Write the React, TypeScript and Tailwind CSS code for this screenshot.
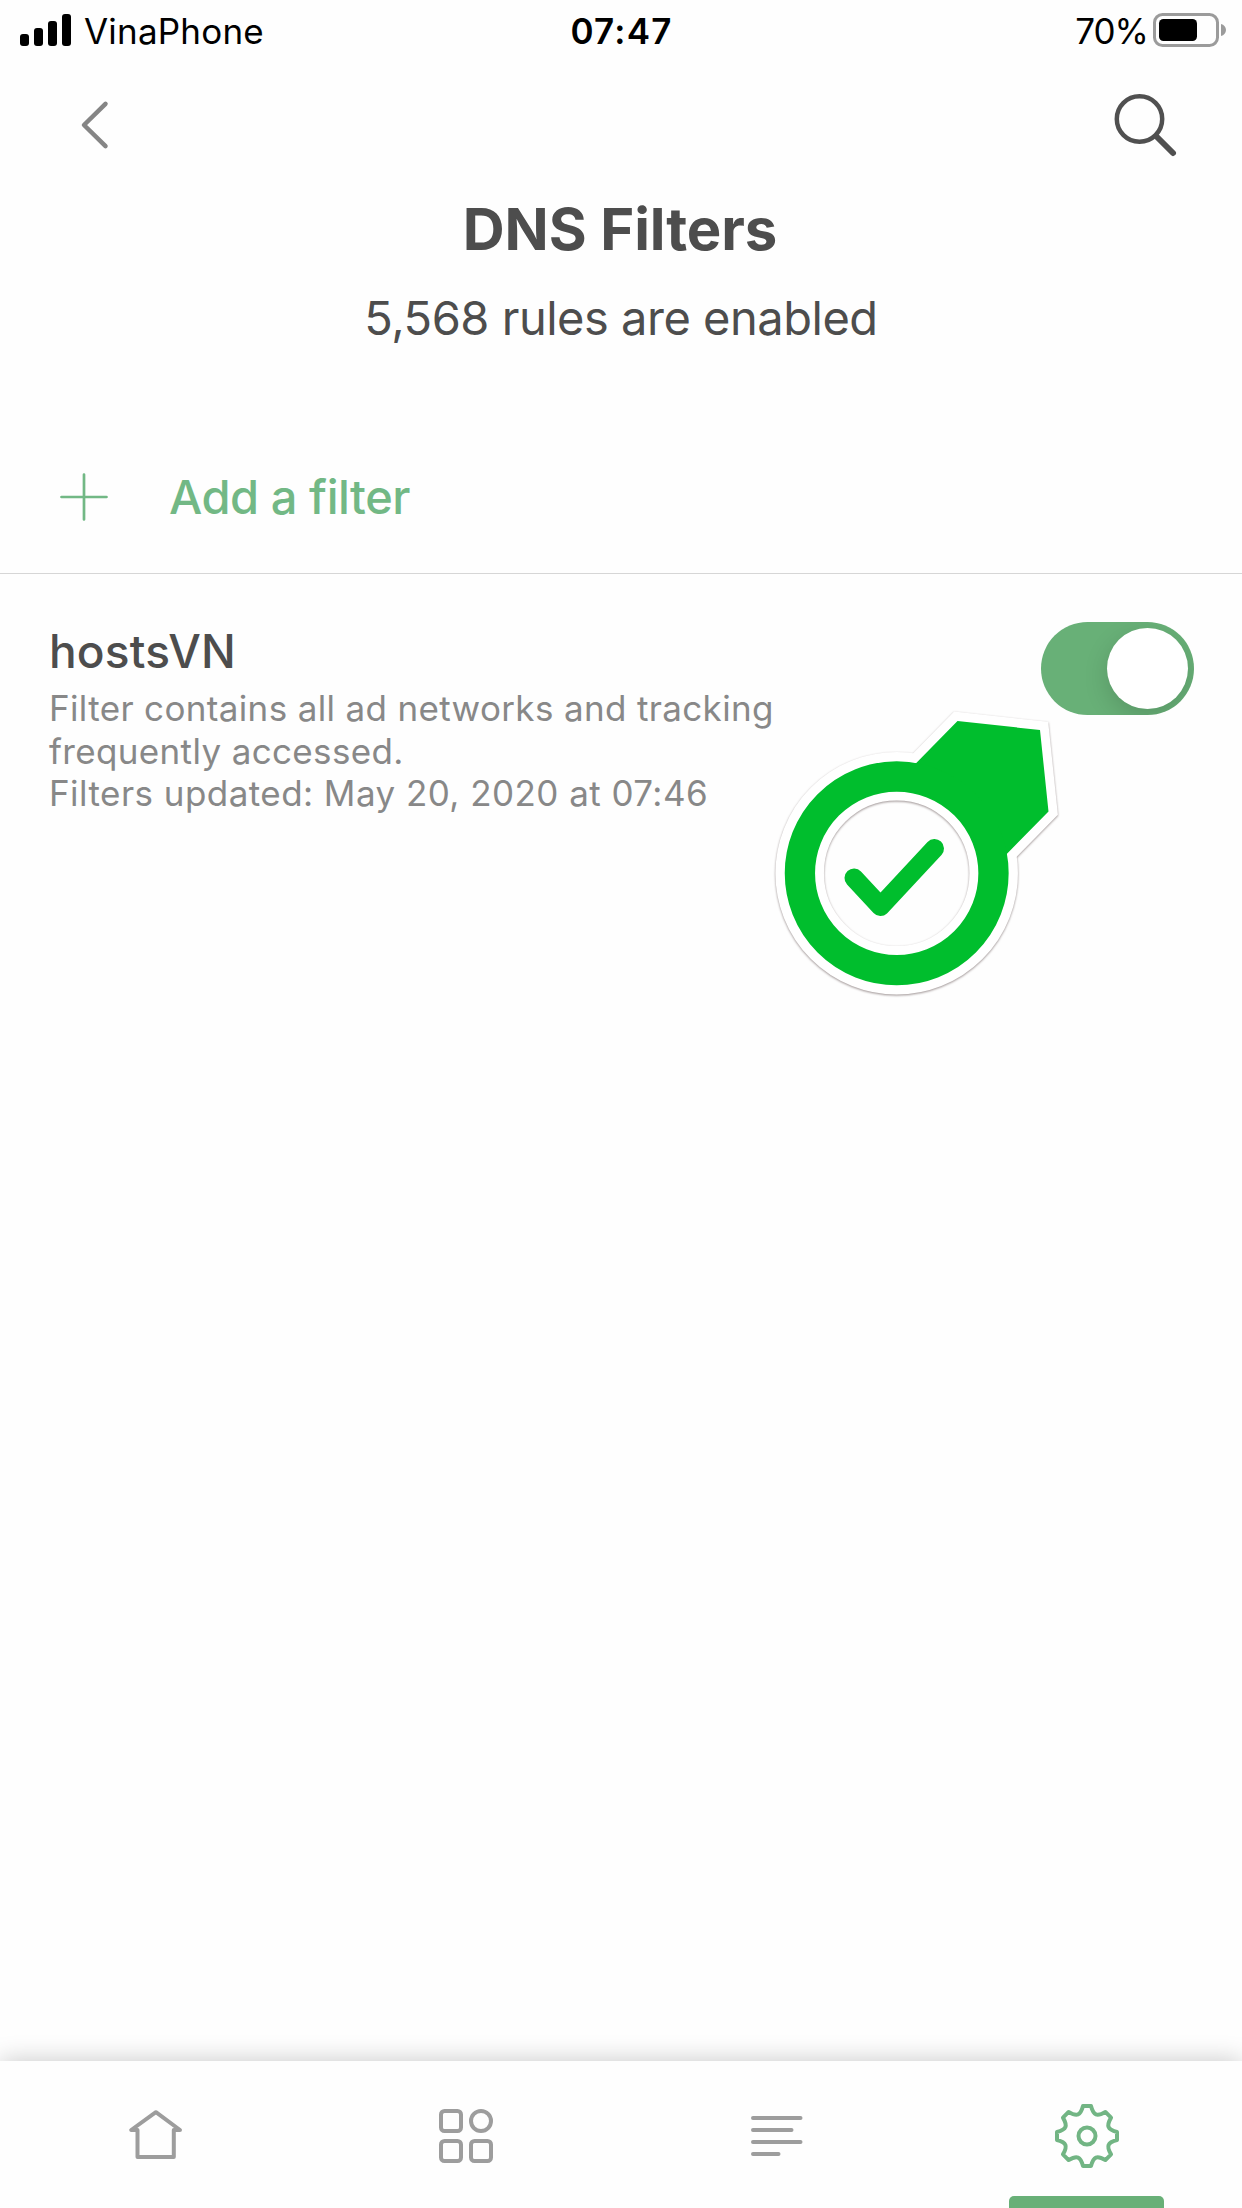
import type { ReactNode } from "react";

// Eight-toothed cog, centred on the origin.
const gearPath = (() => {
  const turn = (x: number, y: number, deg: number) => {
    const a = (deg * Math.PI) / 180;
    return `${(x * Math.cos(a) - y * Math.sin(a)).toFixed(2)} ${(x * Math.sin(a) + y * Math.cos(a)).toFixed(2)}`;
  };
  let d = `M${turn(-4, -30, 0)}`;
  for (let i = 0; i < 8; i++) {
    const a = i * 45;
    d += `L${turn(4, -30, a)}C${turn(6.5, -20.5, a)} ${turn(-6.5, -20.5, a + 45)} ${turn(-4, -30, a + 45)}`;
  }
  return d + "Z";
})();

const arrowPath = "M904 775.500 957.500 721 1040 730 1048.500 811.500 994 867 965 805Z";

function StatusBar() {
  return (
    <div className="grid h-[60px] grid-cols-3 items-center pr-4 pl-5 text-[35px] leading-none text-black">
      <div className="flex items-center gap-[13px]">
        <div className="flex h-8 items-end gap-[5px]">
          <i className="h-3 w-[9px] rounded-[3px] bg-black" />
          <i className="h-[18px] w-[9px] rounded-[3px] bg-black" />
          <i className="h-[25px] w-[9px] rounded-[3px] bg-black" />
          <i className="h-8 w-[9px] rounded-[3px] bg-black" />
        </div>
        <span className="pt-0.5 tracking-[0.2px]">VinaPhone</span>
      </div>
      <div className="pt-0.5 pr-[3px] text-center font-semibold tracking-[1.2px]">07:47</div>
      <div className="flex items-center justify-end gap-[5px]">
        <span className="pt-0.5 tracking-[-1px]">70%</span>
        <svg width="73" height="34" viewBox="0 0 73 34">
          <rect x="1.5" y="1.5" width="63" height="31" rx="8" fill="none" stroke="#9b9b9b" strokeWidth="3" />
          <rect x="6" y="6" width="38" height="22" rx="4.5" />
          <path d="M68 11c3 .8 5 3 5 6s-2 5.200-5 6z" fill="#9b9b9b" />
        </svg>
      </div>
    </div>
  );
}

function Toolbar() {
  return (
    <div className="flex h-[130px] items-center justify-between pr-16 pl-20">
      <svg width="32" height="50" viewBox="80 100 32 50" fill="none" stroke="#858585" strokeWidth="4.5" strokeLinecap="round" strokeLinejoin="round">
        <path d="M105.500 103.800 84 125l21.500 21.200" />
      </svg>
      <svg width="66" height="66" viewBox="1112 92 66 66" fill="none" stroke="#505050" strokeLinecap="round">
        <circle cx="1139.500" cy="119" r="22.700" strokeWidth="4.500" />
        <path d="M1156.500 136.500 1173 153" strokeWidth="6" />
      </svg>
    </div>
  );
}

function Switch() {
  return (
    <div role="switch" aria-checked="true" className="flex h-[93px] w-[153px] items-center justify-end overflow-hidden rounded-full bg-[#68b077] pr-1.5">
      <div className="size-[81px] rounded-full bg-white shadow-[0_8px_24px_rgba(0,0,0,0.15)]" />
    </div>
  );
}

// Check-mark sticker whose arrow points at the switch.
function Marker() {
  return (
    <svg className="absolute top-[136px] left-[766px]" width="304" height="300" viewBox="766 710 304 300" fill="none">
      <g className="drop-shadow-[0_1.5px_1px_rgba(60,40,40,0.5)]">
        <path d={arrowPath} fill="#fff" stroke="#fff" strokeWidth="18" />
        <circle cx="896.700" cy="873.300" r="97" stroke="#fff" strokeWidth="48.500" />
      </g>
      <path d={arrowPath} fill="#00be2d" />
      <circle cx="896.700" cy="873.300" r="96.800" stroke="#00be2d" strokeWidth="30.300" />
      <path d="M854 878 880.500 906.500 934.500 848.500" stroke="#00be2d" strokeWidth="19" strokeLinecap="round" strokeLinejoin="round" />
    </svg>
  );
}

function Tab({ active, children }: { active?: boolean; children: ReactNode }) {
  return (
    <div className={active ? "flex flex-col items-center justify-between pt-10 text-[#72b584]" : "flex flex-col items-center pt-10 text-[#9d9d9d]"}>
      <svg width="70" height="70" viewBox="-35 -35 70 70" fill="none" stroke="currentColor" strokeWidth="4" strokeLinecap="round" strokeLinejoin="round">
        {children}
      </svg>
      {active && <div className="h-3 w-[155px] rounded-t-[5px] bg-[#68b077]" />}
    </div>
  );
}

export default function App() {
  return (
    <div className="flex h-[2208px] w-[1242px] flex-col overflow-hidden bg-[#fefefe] font-['Inter',sans-serif] text-[#4d4d4d]">
      <StatusBar />
      <Toolbar />
      <h1 className="pr-0.5 text-center text-[58px] leading-[78px] font-bold tracking-[-0.1px]">DNS Filters</h1>
      <p className="mt-5 text-center text-[47px] leading-[60px] tracking-[-0.48px]">5,568 rules are enabled</p>

      <div className="mt-[72px] flex h-[154px] items-center border-b border-[#d6d6d6] pl-[60px] text-[#72b885]">
        <svg width="48" height="48" viewBox="0 0 48 48" stroke="currentColor" strokeWidth="2.700" strokeLinecap="round">
          <path d="M24 1.500v45M1.500 24h45" />
        </svg>
        <span className="pl-[61px] text-[47px] leading-[60px] font-medium tracking-[-0.45px]">Add a filter</span>
      </div>

      <main className="relative flex flex-1 items-start justify-between pt-12 pr-12 pl-[49px]">
        <div className="w-[740px] pt-px">
          <h2 className="text-[46px] leading-14 font-medium tracking-[0.2px]">hostsVN</h2>
          <p className="mt-2 text-[35px] leading-[42.5px] tracking-[0.35px] text-[#888888]">
            Filter contains all ad networks and tracking
            <br />
            frequently accessed.
          </p>
          <p className="text-[35px] leading-[42.5px] tracking-[0.45px] text-[#888888]">Filters updated: May 20, 2020 at 07:46</p>
        </div>
        <Switch />
        <Marker />
      </main>

      <nav className="relative grid h-[147px] grid-cols-4 bg-[#fefefe] shadow-[0_0_24px_rgba(0,0,0,0.22)]">
        <Tab>
          <path d="M.900 -23.800 -23.800 -6H-17.500V21H18.800V-6H25Z" />
        </Tab>
        <Tab>
          <rect x="-25" y="-25" width="20" height="20" rx="3.500" />
          <circle cx="15" cy="-15" r="10" />
          <rect x="-25" y="5" width="20" height="20" rx="3.500" />
          <rect x="5" y="5" width="20" height="20" rx="3.500" />
        </Tab>
        <Tab>
          <path d="M-23 -18H24.500M-23 -6H15.500M-23 6H24.500M-23 18H2.500" />
        </Tab>
        <Tab active>
          <path d={gearPath} />
          <circle r="8.500" />
        </Tab>
      </nav>
    </div>
  );
}
